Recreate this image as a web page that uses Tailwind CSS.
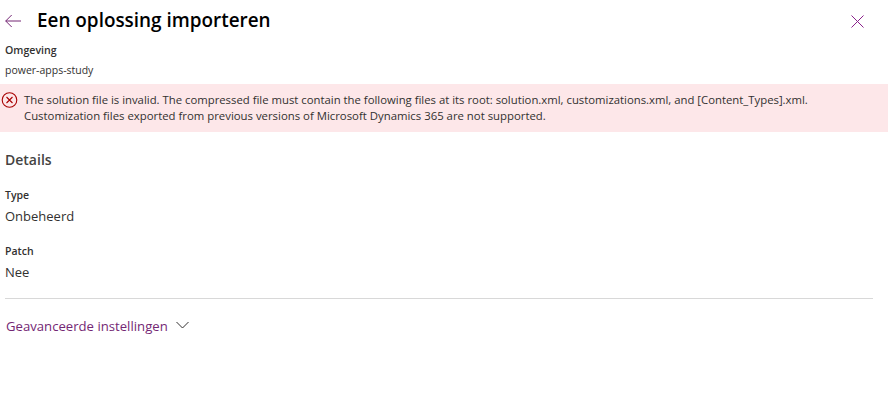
<!doctype html>
<html><head><meta charset="utf-8"><script src="https://cdn.jsdelivr.net/npm/@tailwindcss/browser@4"></script></head>
<body class="bg-white">
<div class="w-[888px] h-[401px] overflow-hidden bg-white text-[#323130] font-['Open_Sans','Noto_Sans',sans-serif]">
  <header class="flex items-center h-[40px] pl-[5px] pr-[24px]">
    <svg class="mt-[1px]" width="16" height="14" viewBox="0 0 16 14" fill="none" stroke="#742774" stroke-width="1"><path d="M0.7 7H16M6.7 1L0.7 7L6.7 13"/></svg>
    <h1 class="ml-[16px] text-[18.9px] leading-[24px] font-semibold text-black">Een oplossing importeren</h1>
    <svg class="ml-auto mt-[2px]" width="13" height="13" viewBox="0 0 13 13" fill="none" stroke="#8a1f8a" stroke-width="1"><path d="M0.5 0.5L12.5 12.5M12.5 0.5L0.5 12.5"/></svg>
  </header>
  <section class="pl-[5px] h-[44px] pt-[2px]">
    <div class="text-[10.6px] leading-[16px] font-semibold">Omgeving</div>
    <div class="text-[10.5px] leading-[16px] mt-[4px]">power-apps-study</div>
  </section>
  <div class="flex bg-[#fde7e9] h-[48px] pl-[1px] pt-[8px] text-[11.33px] leading-[16px]">
    <svg class="shrink-0" width="17" height="17" viewBox="0 0 17 17" fill="none" stroke="#a80000" stroke-width="1.1"><circle cx="8.5" cy="8" r="7.3"/><path d="M5.5 5L11.5 11M11.5 5L5.5 11"/></svg>
    <p class="ml-[6px] whitespace-nowrap">The solution file is invalid. The compressed file must contain the following files at its root: solution.xml, customizations.xml, and [Content_Types].xml.<br><span class="text-[11.37px]">Customization files exported from previous versions of Microsoft Dynamics 365 are not supported.</span></p>
  </div>
  <main class="px-[5px]">
    <h2 class="mt-[18px] text-[14px] leading-[20px] font-semibold text-[#444342]">Details</h2>
    <div class="mt-[17px] text-[10.5px] leading-[16px] font-semibold">Type</div>
    <div class="mt-[4px] text-[13px] leading-[18px]">Onbeheerd</div>
    <div class="mt-[18px] text-[10.5px] leading-[16px] font-semibold">Patch</div>
    <div class="mt-[4px] text-[13px] leading-[18px]">Nee</div>
    <div class="mt-[17px] w-[868px] border-t border-[#d8d8d8]"></div>
    <div class="flex items-center mt-[18px] pl-[1px] text-[13.15px] leading-[18px] text-[#742774]">Geavanceerde instellingen
      <svg class="ml-[8px] mb-[3px]" width="13" height="8" viewBox="0 0 13 8" fill="none" stroke="#323130" stroke-width="1"><path d="M0.5 1L6.5 7L12.5 1"/></svg>
    </div>
  </main>
</div>
</body></html>
